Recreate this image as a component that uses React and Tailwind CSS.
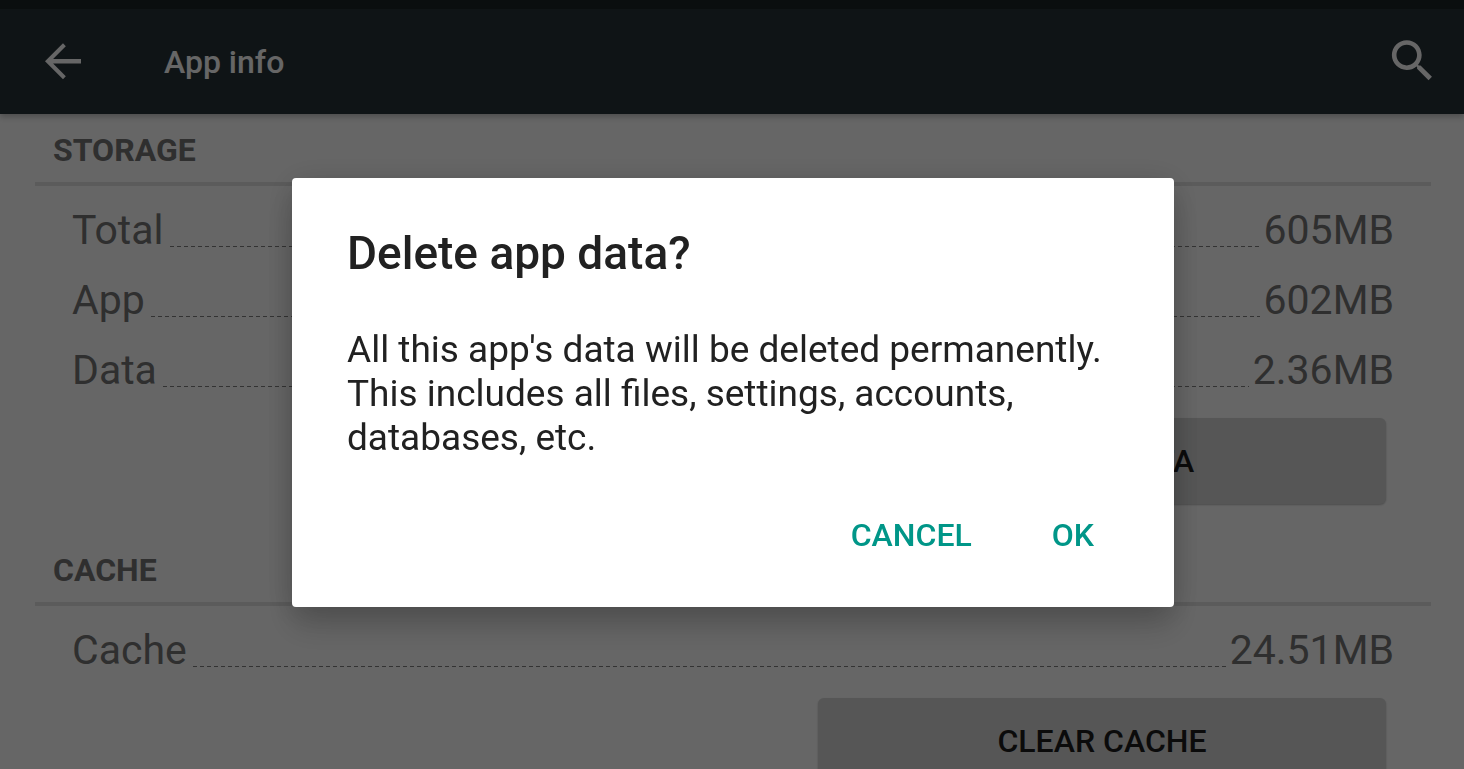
import React from 'react';

const sections = [
  {
    title: 'STORAGE',
    rows: [
      ['Total', '605MB'],
      ['App', '602MB'],
      ['Data', '2.36MB'],
    ],
    action: 'CLEAR DATA',
  },
  { title: 'CACHE', rows: [['Cache', '24.51MB']], action: 'CLEAR CACHE' },
];

function Header() {
  return (
    <header className="relative z-10 shrink-0 border-t-9 border-[#1a2327] bg-[#263238] text-white shadow-[0_3px_6px_rgba(0,0,0,0.25)]">
      <div className="flex h-[105px] items-center pr-6 pl-9">
        <button type="button" aria-label="Back">
          <svg viewBox="0 0 24 24" className="size-[54px] fill-current">
            <path d="M20 10.7H7.6l5.65-5.65L12 3.7l-8 8 8 8 1.25-1.35L7.6 12.7H20z" />
          </svg>
        </button>
        <h1 className="ml-[74px] flex-1 text-[32px] font-medium">App info</h1>
        <button type="button" aria-label="Search">
          <svg viewBox="0 0 24 24" className="size-[55px] fill-current">
            <path transform="translate(0 -0.3)" d="M15.5 14h-.79l-.28-.27C15.41 12.59 16 11.11 16 9.5 16 5.91 13.09 3 9.5 3S3 5.91 3 9.5 5.91 16 9.5 16c1.61 0 3.09-.59 4.23-1.57l.27.28v.79l5 4.99L20.49 19l-4.99-5zm-6 0C7.01 14 5 11.99 5 9.5S7.01 5 9.5 5 14 7.01 14 9.5 11.99 14 9.5 14z" />
          </svg>
        </button>
      </div>
    </header>
  );
}

function Section({ title, rows, action }) {
  return (
    <section className="pb-[30px]">
      <h2 className="mr-[33px] ml-[35px] border-b-4 border-[#e3e3e3] px-[18px] pt-[14px] pb-[10px] text-[32px] leading-11 font-bold text-[#757575]">
        {title}
      </h2>
      <dl className="pt-[9px] pr-[70px] pl-[72px] text-[41px] leading-[70px] text-[#757575]">
        {rows.map(([label, value]) => (
          <div key={label} className="flex items-start">
            <dt>{label}</dt>
            <span
              aria-hidden="true"
              className="mt-[51px] mr-1 ml-1.5 h-px flex-1 bg-[repeating-linear-gradient(90deg,#808080_0_4px,transparent_4px_7px)]"
            />
            <dd>{value}</dd>
          </div>
        ))}
      </dl>
      <div className="mt-[13px] flex justify-end pr-[78px]">
        <button
          type="button"
          className="h-[86px] w-[568px] rounded-md bg-[#d6d7d7] text-[32px] font-medium text-[#1c1c1c] shadow-[0_1px_2px_rgba(0,0,0,0.25)]"
        >
          {action}
        </button>
      </div>
    </section>
  );
}

function DeleteDialog() {
  return (
    <div className="fixed inset-0 z-20 flex items-center justify-center bg-black/60 pt-4 pl-0.5">
      <div
        role="dialog"
        aria-modal="true"
        aria-labelledby="dialog-title"
        className="w-[882px] max-w-full rounded-[4px] bg-white pt-12 pr-14 pb-9 pl-[55px] text-[#212121] shadow-[0_20px_32px_rgba(0,0,0,0.16),0_4px_32px_rgba(0,0,0,0.16)]"
      >
        <h2 id="dialog-title" className="text-[46px] leading-[54px] font-medium">
          Delete app data?
        </h2>
        <p className="mt-12 text-[37px] leading-11">
          All this app's data will be deleted permanently. This includes all files, settings, accounts, databases, etc.
        </p>
        <div className="mt-[39px] flex justify-end gap-12 text-[32px] leading-10 font-medium text-[#009688]">
          <button type="button" className="p-4">CANCEL</button>
          <button type="button" className="py-4 pr-6 pl-4">OK</button>
        </div>
      </div>
    </div>
  );
}

export default function App() {
  return (
    <div className="flex h-screen flex-col overflow-hidden bg-white font-[Roboto,sans-serif]">
      <Header />
      <main className="min-h-0 flex-1 overflow-hidden">
        {sections.map((section) => (
          <Section key={section.title} {...section} />
        ))}
      </main>
      <DeleteDialog />
    </div>
  );
}
